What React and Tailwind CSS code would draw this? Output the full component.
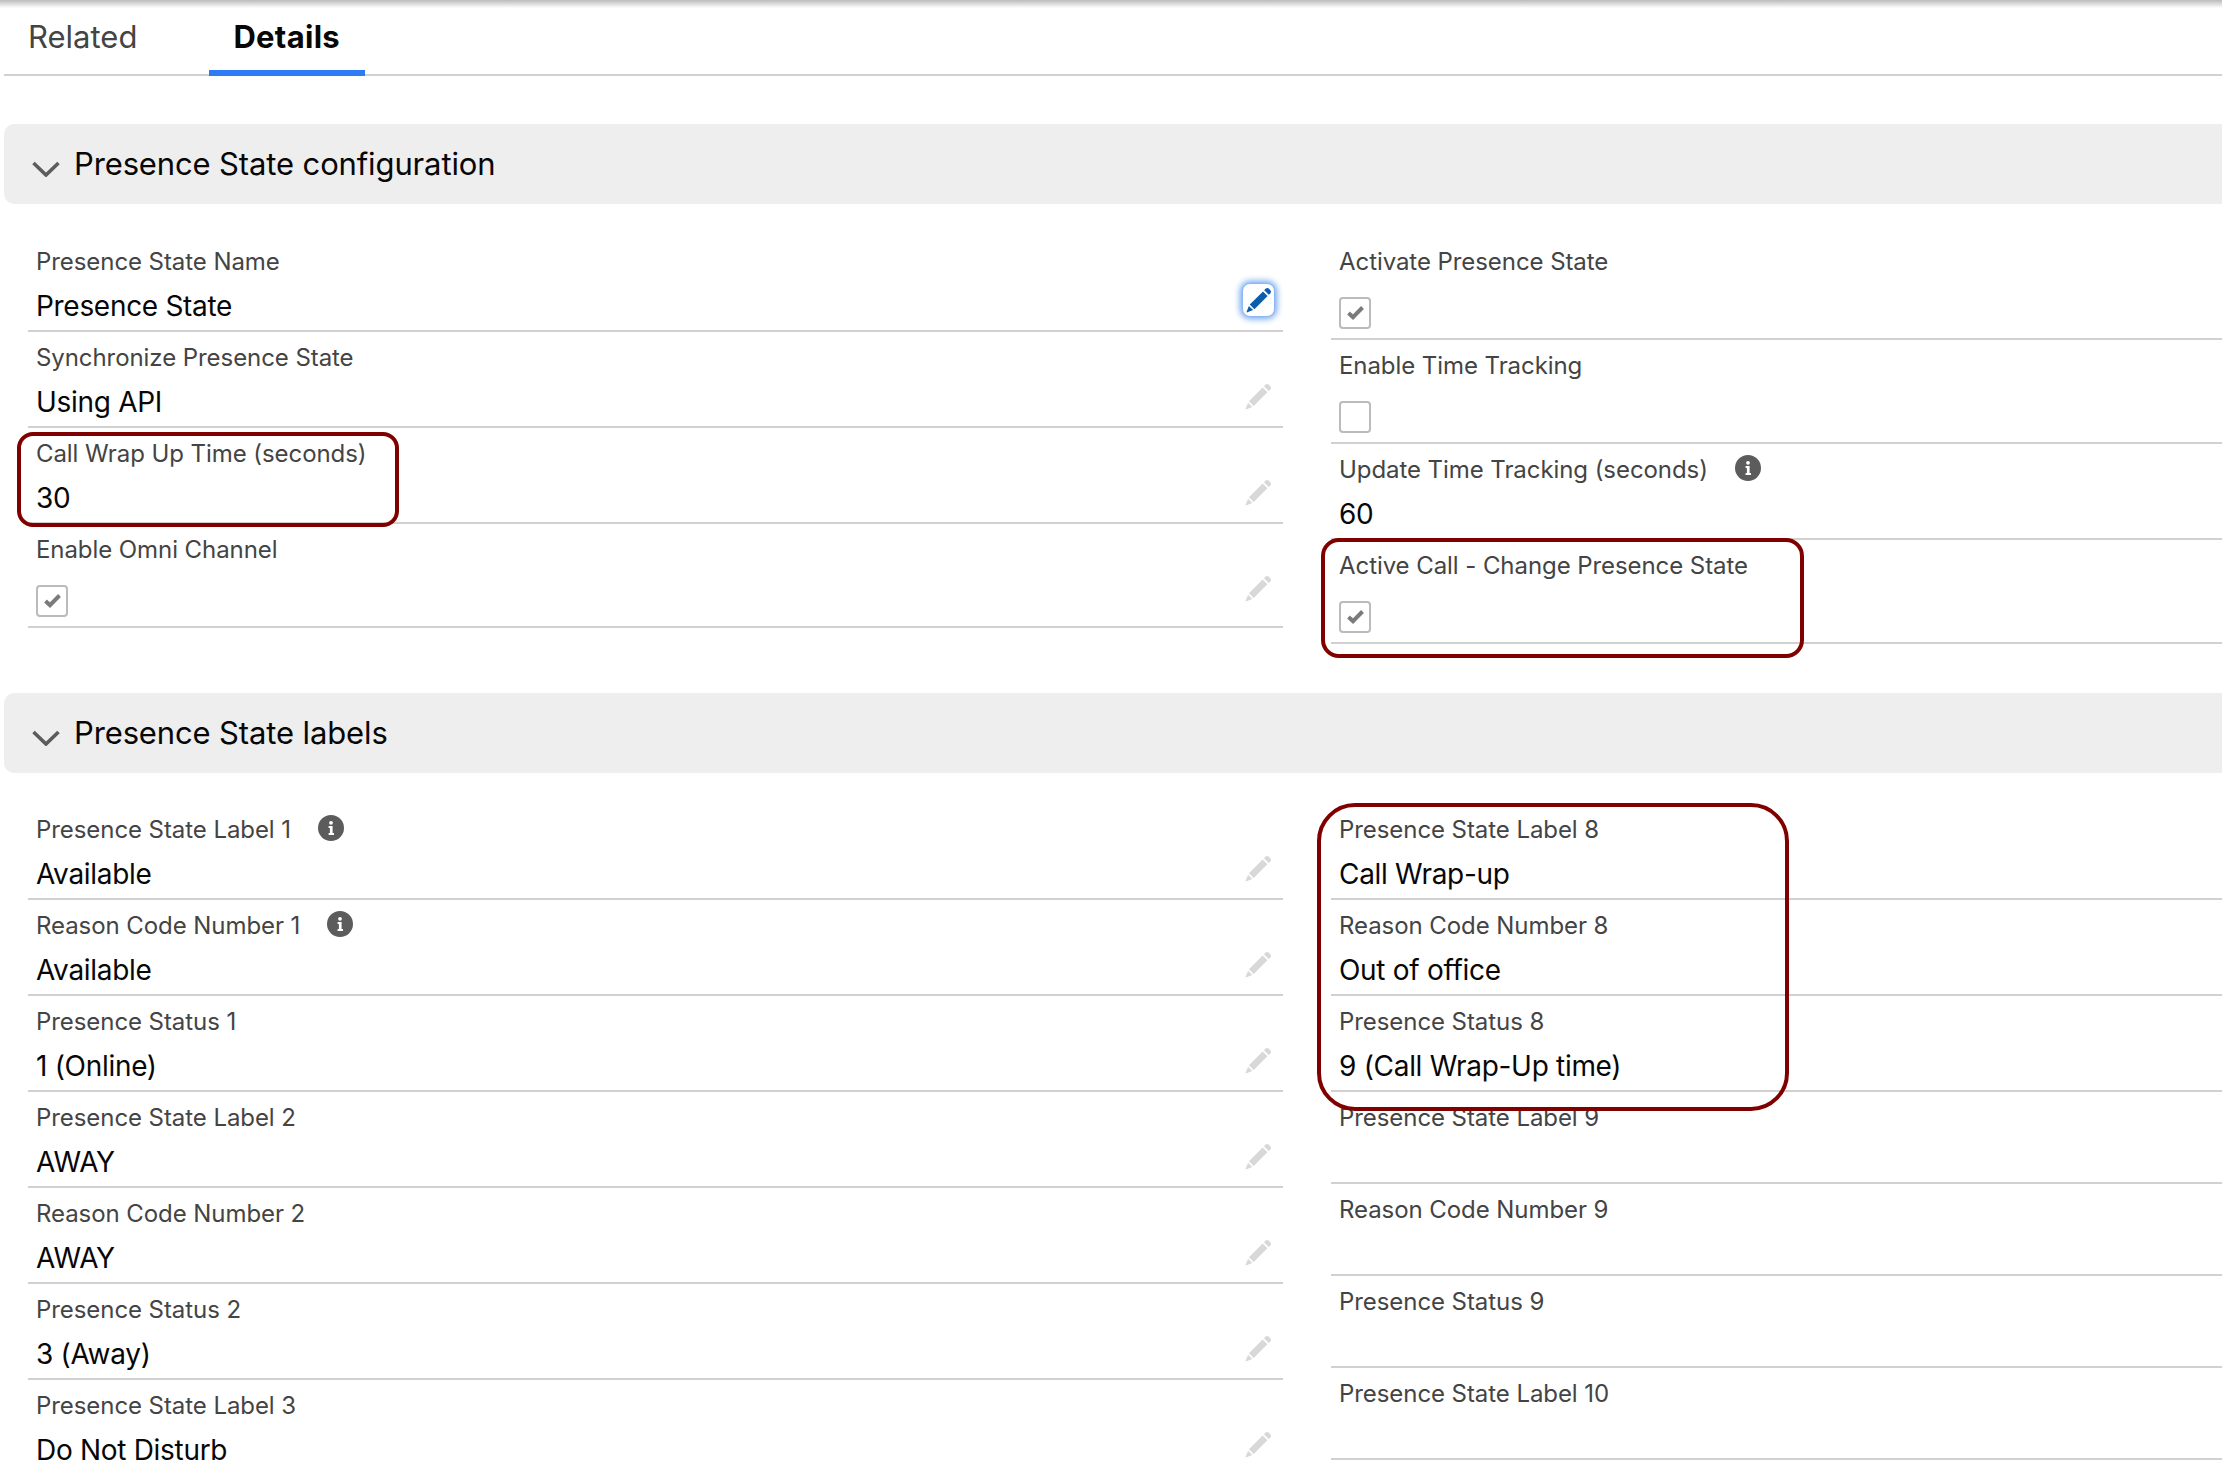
function Pencil({ className }) {
  return (
    <svg viewBox="0 0 26 26" className={className} fill="currentColor">
      <path d="M18.2 3.2L19.8 1.6a2.2 2.2 0 0 1 3 0L24.4 3.2a2.2 2.2 0 0 1 0 3L22.8 7.8Z" />
      <path d="M17 4.4L21.6 9L8.4 22.2L3.8 17.6Z" />
      <path d="M2.9 18.9L7.1 23.1L1.4 25.3a.5.5 0 0 1-.7-.7Z" />
    </svg>
  )
}

function InfoIcon() {
  return (
    <svg viewBox="0 0 26 26" className="w-[26px] h-[26px] ml-[27px] shrink-0 -mt-1">
      <circle cx="13" cy="13" r="13" fill="#5c5c5c" />
      <circle cx="13" cy="7.8" r="1.9" fill="#fff" />
      <path d="M10.6 11h4v7h1.4v2h-5.4v-2h1.3v-5h-1.3Z" fill="#fff" />
    </svg>
  )
}

function Checkbox({ checked }) {
  return (
    <div className="mt-5 w-8 h-8 border-2 border-[#bdbaba] rounded-[4px] flex items-center justify-center bg-white">
      {checked && (
        <svg viewBox="0 0 17 14" className="w-[17px] h-[14px]" fill="none" stroke="#7b7b7b" strokeWidth="4">
          <path d="M1.5 7L6 11.2L15.5 1.5" />
        </svg>
      )}
    </div>
  )
}

function Field({ label, value, info, check, checked, empty, edit, active }) {
  return (
    <div className={`flex border-b-2 border-[#d3d0d0] pl-2 pr-2 ${empty ? "h-[92px]" : ""}`}>
      <div className={`flex-1 pt-[11px] ${check ? "pb-[9px]" : "pb-2"}`}>
        <div className="flex items-center text-[24px] leading-[30px] text-[#444444] tracking-[-0.07px]">
          <span>{label}</span>
          {info && <InfoIcon />}
        </div>
        {check && <Checkbox checked={checked} />}
        {value && <div className="mt-[13px] text-[28px] leading-8 text-[#080707] tracking-[-0.3px]">{value}</div>}
      </div>
      {edit && !active && <Pencil className="w-[27px] h-[27px] mt-[51px] mr-[3px] text-[#d8d8d8] blur-[0.7px]" />}
      {active && (
        <div className="w-[33px] h-[34px] mt-[47px] flex items-center justify-center rounded-[8px] bg-white border border-[#8cb8f2] shadow-[0_0_6px_2px_#6ea5f0]">
          <Pencil className="w-[26px] h-[26px] text-[#0b5cab]" />
        </div>
      )}
    </div>
  )
}

function SectionHeader({ title }) {
  return (
    <div className="h-20 ml-1 flex items-center bg-[#eeeeee] rounded-l-[10px] pl-[28px]">
      <svg viewBox="0 0 28 16" className="w-7 h-4 mt-[10px] shrink-0" fill="none" stroke="#5c5c5c" strokeWidth="3.6">
        <path d="M1.5 2L14 14L26.5 2" />
      </svg>
      <h2 className="ml-[14px] text-[31px] leading-10 font-normal text-[#080707] tracking-[-0.13px]">{title}</h2>
    </div>
  )
}

export default function App() {
  return (
    <div className="relative w-[2222px] h-[1466px] overflow-hidden bg-white font-['Inter',sans-serif]">
      <div className="h-2 bg-linear-to-b from-[#bdbbbd] to-white" />

      {/* Tabs */}
      <div className="ml-1 h-[68px] flex gap-12 border-b-2 border-[#d3d0d0]">
        <div className="px-6 pt-[11px] text-[31px] leading-9 text-[#444444]">Related</div>
        <div className="pl-6 pr-[25px] pt-[11px] h-[68px] text-[31px] leading-9 font-bold text-[#080707] tracking-[0.3px] border-b-[6px] border-[#2f7bf5]">Details</div>
      </div>

      {/* Presence State configuration */}
      <div className="mt-12">
        <SectionHeader title="Presence State configuration" />
        <div className="mt-8 ml-7 flex gap-12">
          <div className="w-[1255px]">
            <Field label="Presence State Name" value="Presence State" active />
            <Field label="Synchronize Presence State" value="Using API" edit />
            <Field label="Call Wrap Up Time (seconds)" value="30" edit />
            <Field label="Enable Omni Channel" check checked edit />
          </div>
          <div className="flex-1">
            <Field label="Activate Presence State" check checked />
            <Field label="Enable Time Tracking" check />
            <Field label="Update Time Tracking (seconds)" value="60" info />
            <Field label="Active Call - Change Presence State" check checked />
          </div>
        </div>
      </div>

      {/* Presence State labels */}
      <div className="mt-[49px]">
        <SectionHeader title="Presence State labels" />
        <div className="mt-[31px] ml-7 flex gap-12">
          <div className="w-[1255px]">
            <Field label="Presence State Label 1" value="Available" info edit />
            <Field label="Reason Code Number 1" value="Available" info edit />
            <Field label="Presence Status 1" value="1 (Online)" edit />
            <Field label="Presence State Label 2" value="AWAY" edit />
            <Field label="Reason Code Number 2" value="AWAY" edit />
            <Field label="Presence Status 2" value="3 (Away)" edit />
            <Field label="Presence State Label 3" value="Do Not Disturb" edit />
          </div>
          <div className="flex-1">
            <Field label="Presence State Label 8" value="Call Wrap-up" />
            <Field label="Reason Code Number 8" value="Out of office" />
            <Field label="Presence Status 8" value="9 (Call Wrap-Up time)" />
            <Field label="Presence State Label 9" empty />
            <Field label="Reason Code Number 9" empty />
            <Field label="Presence Status 9" empty />
            <Field label="Presence State Label 10" empty />
          </div>
        </div>
      </div>

      {/* Red annotation boxes drawn over the page */}
      <div className="absolute left-[17px] top-[432px] w-[382px] h-[95px] border-4 border-[#800000] rounded-[16px]" />
      <div className="absolute left-[1321px] top-[538px] w-[483px] h-[120px] border-4 border-[#800000] rounded-[18px]" />
      <div className="absolute left-[1317px] top-[803px] w-[472px] h-[308px] border-4 border-[#800000] rounded-[38px]" />
    </div>
  )
}
